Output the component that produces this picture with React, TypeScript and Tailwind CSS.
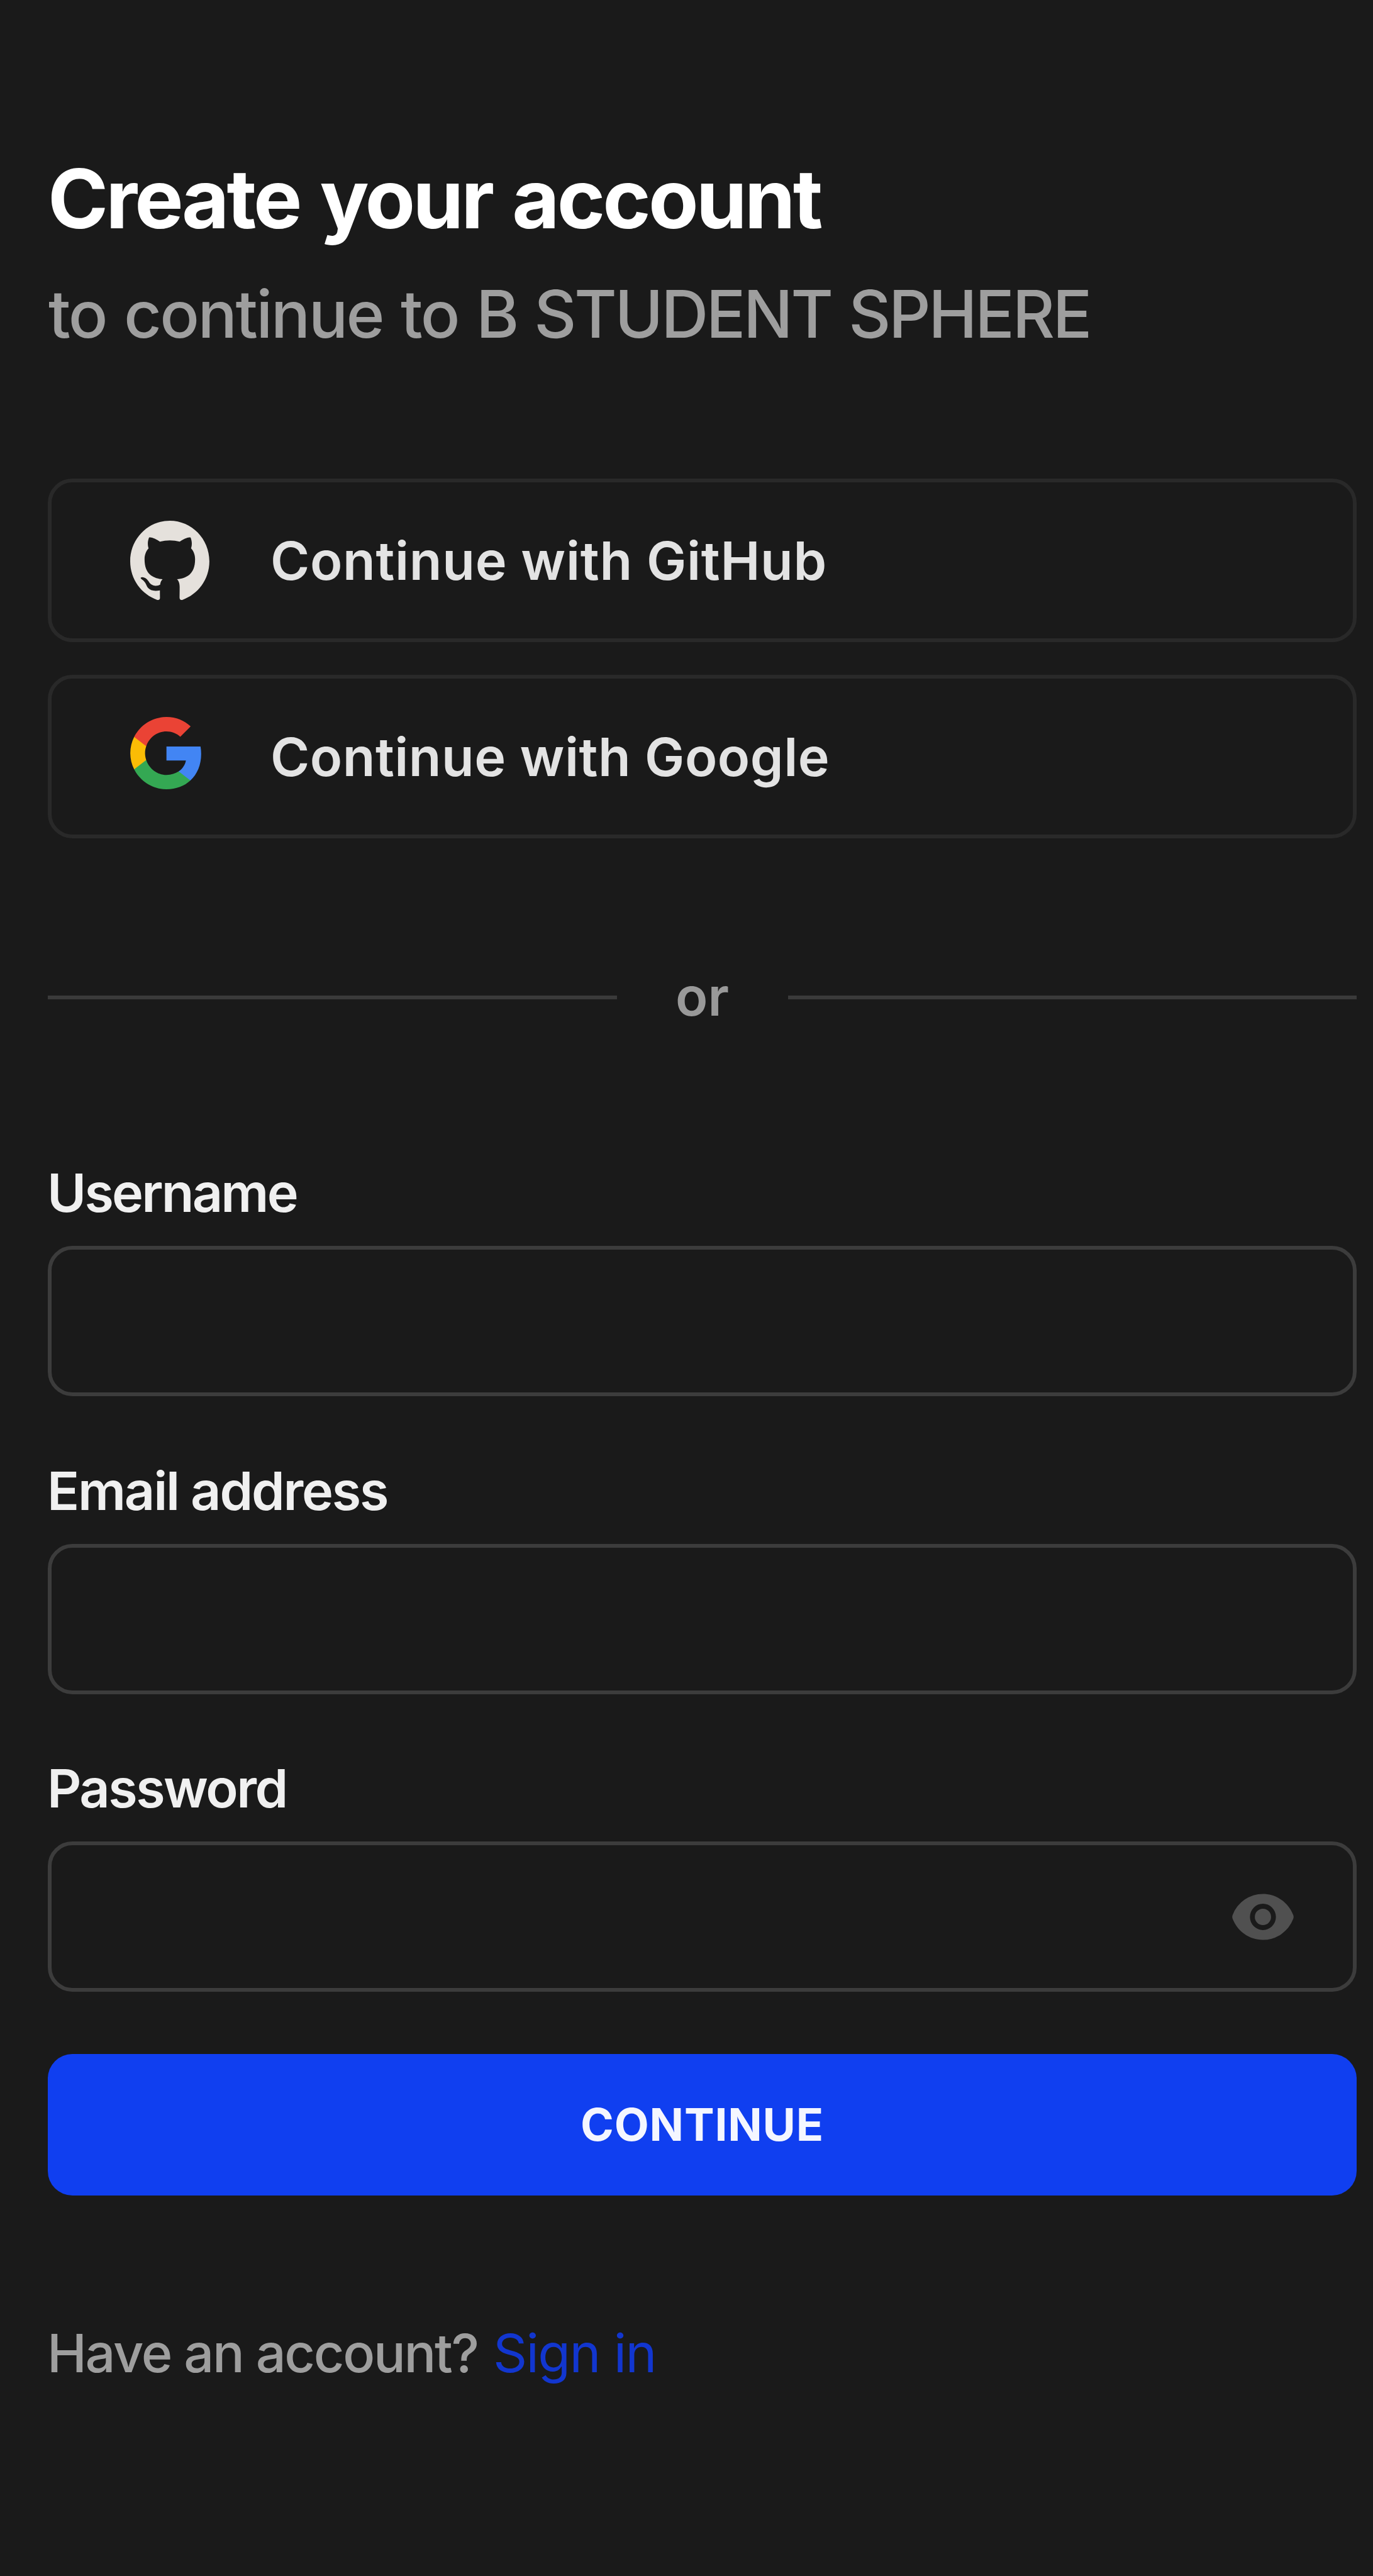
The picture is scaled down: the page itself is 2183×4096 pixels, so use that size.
import type { ReactNode } from 'react';

function GitHubIcon() {
  return (
    <svg viewBox="0 0 97.7 96" preserveAspectRatio="none" className="h-[126px] w-[126px]" fill="#e5e1dc">
      <path
        fillRule="evenodd"
        clipRule="evenodd"
        d="M48.854 0C21.839 0 0 22 0 49.217c0 21.756 13.993 40.172 33.405 46.69 2.427.49 3.316-1.059 3.316-2.362 0-1.141-.08-5.052-.08-9.127-13.59 2.934-16.42-5.867-16.42-5.867-2.184-5.704-5.42-7.17-5.42-7.17-4.448-3.015.324-3.015.324-3.015 4.934.326 7.523 5.052 7.523 5.052 4.367 7.496 11.404 5.378 14.235 4.074.404-3.178 1.699-5.378 3.074-6.6-10.839-1.141-22.243-5.378-22.243-24.283 0-5.378 1.94-9.778 5.014-13.2-.485-1.222-2.184-6.275.486-13.038 0 0 4.125-1.304 13.426 5.052a46.97 46.97 0 0 1 12.214-1.63c4.125 0 8.33.571 12.213 1.63 9.302-6.356 13.427-5.052 13.427-5.052 2.67 6.763.97 11.816.485 13.038 3.155 3.422 5.015 7.822 5.015 13.2 0 18.905-11.404 23.06-22.324 24.283 1.78 1.548 3.316 4.481 3.316 9.126 0 6.6-.08 11.897-.08 13.526 0 1.304.89 2.853 3.316 2.364 19.412-6.52 33.405-24.935 33.405-46.691C97.707 22 75.788 0 48.854 0z"
      />
    </svg>
  );
}

function GoogleIcon() {
  return (
    <svg viewBox="1 1 21.56 22" className="h-[115px] w-[113px]">
      <path fill="#4285F4" d="M22.56 12.25c0-.78-.07-1.53-.2-2.25H12v4.26h5.92c-.26 1.37-1.04 2.53-2.21 3.31v2.77h3.57c2.08-1.92 3.28-4.74 3.28-8.09z" />
      <path fill="#34A853" d="M12 23c2.97 0 5.46-.98 7.28-2.66l-3.57-2.77c-.98.66-2.23 1.06-3.71 1.06-2.86 0-5.29-1.93-6.16-4.53H2.18v2.84C3.99 20.53 7.7 23 12 23z" />
      <path fill="#FBBC05" d="M5.84 14.09c-.22-.66-.35-1.36-.35-2.09s.13-1.43.35-2.09V7.07H2.18C1.43 8.55 1 10.22 1 12s.43 3.45 1.18 4.93l2.85-2.22.81-.62z" />
      <path fill="#EA4335" d="M12 5.38c1.62 0 3.06.56 4.21 1.64l3.15-3.15C17.45 2.09 14.97 1 12 1 7.7 1 3.99 3.47 2.18 7.07l3.66 2.84c.87-2.6 3.3-4.53 6.16-4.53z" />
    </svg>
  );
}

function EyeIcon() {
  return (
    <svg viewBox="0 0 16 16" className="h-[130px] w-[130px]" fill="#505050">
      <path d="M8 9.607c.421 0 .825-.17 1.123-.47a1.617 1.617 0 0 0 0-2.273 1.578 1.578 0 0 0-2.246 0 1.617 1.617 0 0 0 0 2.272c.298.302.702.471 1.123.471Z" />
      <path
        fillRule="evenodd"
        clipRule="evenodd"
        d="M2.07 8.38a1.073 1.073 0 0 1 0-.763 6.42 6.42 0 0 1 2.334-2.99A6.302 6.302 0 0 1 8 3.5c2.704 0 5.014 1.71 5.93 4.12.094.246.093.518 0 .763a6.418 6.418 0 0 1-2.334 2.99A6.301 6.301 0 0 1 8 12.5c-2.704 0-5.013-1.71-5.93-4.12ZM10.54 8c0 .682-.267 1.336-.743 1.818A2.526 2.526 0 0 1 8 10.571c-.674 0-1.32-.27-1.796-.753A2.587 2.587 0 0 1 5.46 8c0-.682.267-1.336.743-1.818A2.526 2.526 0 0 1 8 5.429c.674 0 1.32.27 1.796.753.476.482.744 1.136.744 1.818Z"
      />
    </svg>
  );
}

function SocialButton({ icon, children }: { icon: ReactNode; children: ReactNode }) {
  return (
    <button className="flex h-[260px] w-full items-center rounded-[39px] border-[6px] border-[#292929] pl-[125px] text-left">
      <span className="mr-[97px] block h-[126px] w-[126px] shrink-0">{icon}</span>
      {children}
    </button>
  );
}

function Field({ id, type, label, trailing }: { id: string; type: string; label: ReactNode; trailing?: ReactNode }) {
  return (
    <div className="flex flex-col gap-[35px]">
      <label htmlFor={id} className="-ml-[1px] text-[84.5px] leading-[100px] font-semibold text-[#f0f0f0]">
        {label}
      </label>
      <div className="flex h-[239px] items-center rounded-[39px] border-[6px] border-[#3c3c3c] pr-[78px]">
        <input id={id} type={type} className="h-full min-w-0 flex-1 bg-transparent px-[76px] text-[84.5px] text-white outline-none" />
        {trailing}
      </div>
    </div>
  );
}

export default function App() {
  return (
    <main className="h-[4096px] w-full overflow-hidden bg-[#1a1a1a] pt-[238px] pr-[26px] pl-[76px] font-['Inter',sans-serif]">
      <header className="flex flex-col gap-[41px] whitespace-nowrap">
        <h1 className="text-[130px] leading-[156px] font-bold tracking-[-3.9px] text-white [word-spacing:5px]">Create your account</h1>
        <p className="ml-[1px] text-[104px] leading-[128px] font-medium text-[#9e9e9e] [word-spacing:3px]">
          <span className="tracking-[-2.65px]">to continue to </span>
          <span className="tracking-[-3.4px]">B STUDENT SPHERE</span>
        </p>
      </header>

      <div className="mt-[198px] flex flex-col gap-[52px] text-[84.5px] font-[580] text-[#e3e3e3]">
        <SocialButton icon={<GitHubIcon />}>
          <span className="tracking-[0.7px]">Continue with GitHub</span>
        </SocialButton>
        <SocialButton icon={<GoogleIcon />}>
          <span className="tracking-[0.5px]">Continue with Google</span>
        </SocialButton>
      </div>

      <div className="mt-[200px] flex h-[100px] items-center">
        <span className="mt-[5px] h-[6px] flex-1 bg-[#3a3a3a]" />
        <span className="w-[272px] pt-[2px] text-center text-[84.5px] leading-[100px] font-semibold text-[#999999]">or</span>
        <span className="mt-[5px] h-[6px] flex-1 bg-[#3a3a3a]" />
      </div>

      <form className="mt-[213px]" onSubmit={(e) => e.preventDefault()}>
        <div className="flex flex-col gap-[99.7px]">
          <Field id="username" type="text" label={<span className="tracking-[-2.8px]">Username</span>} />
          <Field id="email" type="email" label={<span className="tracking-[-2.2px]">Email address</span>} />
          <Field
            id="password"
            type="password"
            label={<span className="tracking-[-2.5px]">Password</span>}
            trailing={
              <button type="button" aria-label="Show password">
                <EyeIcon />
              </button>
            }
          />
        </div>
        <button
          type="submit"
          className="mt-[99px] flex h-[225px] w-full items-center justify-center rounded-[39px] bg-[#103ff0] text-[71.5px] font-bold tracking-[0.8px] text-[#f4f6ff]"
        >
          CONTINUE
        </button>
      </form>

      <footer className="mt-[200px] flex text-[84.5px] leading-[100px] whitespace-nowrap">
        <span className="-ml-[1px] w-[709px] font-medium tracking-[-2.3px] text-[#9e9e9e]">Have an account?</span>
        <a href="#" className="tracking-[-1.7px] text-[#1236cf]">
          Sign in
        </a>
      </footer>
    </main>
  );
}
